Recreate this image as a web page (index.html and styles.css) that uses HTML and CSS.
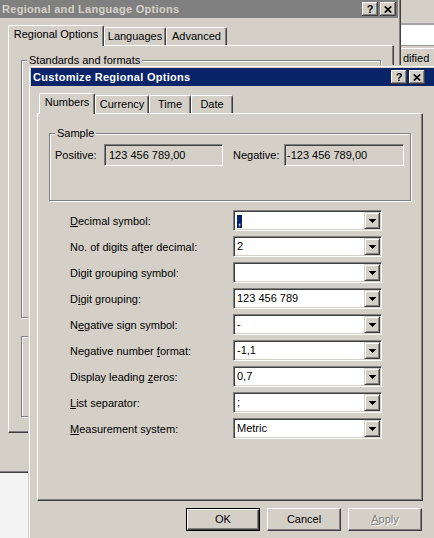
FILE: index.html
```html
<!DOCTYPE html>
<html>
<head>
<meta charset="utf-8">
<title>Customize Regional Options</title>
<link rel="stylesheet" href="styles.css">
</head>
<body>
<div class="win-side">
  <div class="side-field"></div>
  <div class="side-sep"></div>
  <div class="side-text">dified</div>
</div>

<div class="win win-back">
  <div class="title inactive">
    <span class="title-text">Regional and Language Options</span>
    <span class="cap-btns">
      <span class="cap-btn">?</span>
      <span class="cap-btn"><svg width="8" height="7" viewBox="0 0 8 7"><path d="M0.8 0.4 L7.2 6.6 M7.2 0.4 L0.8 6.6" stroke="#000" stroke-width="1.7"/></svg></span>
    </span>
  </div>
  <div class="client back-client">
    <div class="tabs">
      <div class="tab sel w-reg">Regional Options</div>
      <div class="tab w-lang">Languages</div>
      <div class="tab w-adv">Advanced</div>
    </div>
    <div class="panel">
      <div class="group back-g1"><span class="legend">Standards and formats</span></div>
      <div class="group back-g2"></div>
    </div>
  </div>
</div>

<div class="win win-front">
  <div class="title active">
    <span class="title-text">Customize Regional Options</span>
    <span class="cap-btns front-btns">
      <span class="cap-btn">?</span>
      <span class="cap-btn"><svg width="8" height="7" viewBox="0 0 8 7"><path d="M0.8 0.4 L7.2 6.6 M7.2 0.4 L0.8 6.6" stroke="#000" stroke-width="1.7"/></svg></span>
    </span>
  </div>
  <div class="client front-client">
    <div class="tabs front-tabs">
      <div class="tab sel w-num">Numbers</div>
      <div class="tab w-cur">Currency</div>
      <div class="tab w-time">Time</div>
      <div class="tab w-date">Date</div>
    </div>
    <div class="panel">
      <div class="group sample">
        <span class="legend">Sample</span>
        <div class="sample-row">
          <span class="s-label">Positive:</span>
          <span class="readout pos">123 456 789,00</span>
          <span class="s-label neg">Negative:</span>
          <span class="readout negbox">-123 456 789,00</span>
        </div>
      </div>
      <div class="rows">
        <span class="lbl"><u>D</u>ecimal symbol:</span>
        <div class="combo"><span class="combo-val"><span class="hl">,</span></span><span class="drop"><svg width="7" height="4" viewBox="0 0 7 4"><path d="M0 0h7v1h-1v1h-1v1h-1v1h-1v-1h-1v-1h-1v-1h-1z"/></svg></span></div>

        <span class="lbl">No. of digits af<u>t</u>er decimal:</span>
        <div class="combo"><span class="combo-val">2</span><span class="drop"><svg width="7" height="4" viewBox="0 0 7 4"><path d="M0 0h7v1h-1v1h-1v1h-1v1h-1v-1h-1v-1h-1v-1h-1z"/></svg></span></div>

        <span class="lbl">Digit <u>g</u>rouping symbol:</span>
        <div class="combo"><span class="combo-val"></span><span class="drop"><svg width="7" height="4" viewBox="0 0 7 4"><path d="M0 0h7v1h-1v1h-1v1h-1v1h-1v-1h-1v-1h-1v-1h-1z"/></svg></span></div>

        <span class="lbl">D<u>i</u>git grouping:</span>
        <div class="combo"><span class="combo-val">123 456 789</span><span class="drop"><svg width="7" height="4" viewBox="0 0 7 4"><path d="M0 0h7v1h-1v1h-1v1h-1v1h-1v-1h-1v-1h-1v-1h-1z"/></svg></span></div>

        <span class="lbl">N<u>e</u>gative sign symbol:</span>
        <div class="combo"><span class="combo-val">-</span><span class="drop"><svg width="7" height="4" viewBox="0 0 7 4"><path d="M0 0h7v1h-1v1h-1v1h-1v1h-1v-1h-1v-1h-1v-1h-1z"/></svg></span></div>

        <span class="lbl">Negative number <u>f</u>ormat:</span>
        <div class="combo"><span class="combo-val">-1,1</span><span class="drop"><svg width="7" height="4" viewBox="0 0 7 4"><path d="M0 0h7v1h-1v1h-1v1h-1v1h-1v-1h-1v-1h-1v-1h-1z"/></svg></span></div>

        <span class="lbl">Display leading <u>z</u>eros:</span>
        <div class="combo"><span class="combo-val">0,7</span><span class="drop"><svg width="7" height="4" viewBox="0 0 7 4"><path d="M0 0h7v1h-1v1h-1v1h-1v1h-1v-1h-1v-1h-1v-1h-1z"/></svg></span></div>

        <span class="lbl"><u>L</u>ist separator:</span>
        <div class="combo"><span class="combo-val">;</span><span class="drop"><svg width="7" height="4" viewBox="0 0 7 4"><path d="M0 0h7v1h-1v1h-1v1h-1v1h-1v-1h-1v-1h-1v-1h-1z"/></svg></span></div>

        <span class="lbl"><u>M</u>easurement system:</span>
        <div class="combo"><span class="combo-val">Metric</span><span class="drop"><svg width="7" height="4" viewBox="0 0 7 4"><path d="M0 0h7v1h-1v1h-1v1h-1v1h-1v-1h-1v-1h-1v-1h-1z"/></svg></span></div>
      </div>
    </div>
    <div class="btn-row">
      <button class="btn default">OK</button>
      <button class="btn">Cancel</button>
      <button class="btn disabled"><u>A</u>pply</button>
    </div>
  </div>
</div>
</body>
</html>
```

FILE: styles.css
```css
* { box-sizing: border-box; }
html, body { margin: 0; padding: 0; }
body {
  width: 434px;
  height: 538px;
  overflow: hidden;
  position: relative;
  background: #f4f4f4;
  font-family: "Liberation Sans", Arial, sans-serif;
  font-size: 11px;
  color: #000;
}

/* window partly hidden at the right */
.win-side {
  position: absolute;
  left: 398px;
  top: 0;
  width: 36px;
  height: 70px;
  background: #d4d0c8;
  z-index: 0;
}
.side-field {
  margin-top: 23px;
  height: 22px;
  background: #fff;
  border-top: 2px solid #a4a4a4;
}
.side-sep {
  height: 4px;
  border-top: 1px solid #9a9a9a;
  border-bottom: 1px solid #fff;
}
.side-text {
  padding: 3px 0 0 5px;
  line-height: 13px;
}

/* windows (cropped by the screen edges) */
.win {
  position: absolute;
  background: #d4d0c8;
  display: flex;
  flex-direction: column;
}
.win-back {
  left: 0;
  top: 0;
  width: 401px;
  height: 473px;
  z-index: 1;
  border-right: 1px solid #404040;
  border-bottom: 1px solid #404040;
  box-shadow: inset -1px -1px #808080;
  padding: 0 2px 2px 0;
}
.win-front {
  left: 28px;
  top: 65px;
  width: 406px;
  height: 473px;
  z-index: 2;
  border-left: 1px solid #d4d0c8;
  border-top: 1px solid #d4d0c8;
  box-shadow: inset 1px 1px #fff;
  padding: 2px 0 0 2px;
}

.title {
  height: 18px;
  flex: none;
  display: flex;
  align-items: center;
  padding: 0 2px 0 2px;
  font-weight: bold;
  letter-spacing: 0.3px;
}
.title.inactive { background: #808080; color: #d4d0c8; }
.title.active { background: #0a246a; color: #fff; }
.title-text { flex: 1; white-space: nowrap; }
.cap-btns { display: flex; gap: 2px; }
.front-btns { margin-right: 7px; }
.cap-btn {
  width: 16px;
  height: 14px;
  background: #d4d0c8;
  box-shadow: inset -1px -1px #404040, inset 1px 1px #fff, inset -2px -2px #808080;
  color: #000;
  font-weight: bold;
  font-size: 11px;
  letter-spacing: 0;
  line-height: 14px;
  display: flex;
  align-items: center;
  justify-content: center;
}

.client { flex: 1; padding-top: 7px; }
.back-client { padding-left: 8px; }
.front-client { padding-left: 6px; }

/* tabs */
.tabs { display: flex; align-items: flex-end; height: 20px; }
.front-tabs { padding-left: 2px; }
.tab {
  height: 18px;
  border: 1px solid;
  border-color: #fff #404040 transparent #fff;
  border-bottom: 0;
  border-radius: 2px 2px 0 0;
  box-shadow: inset -1px 0 #808080;
  text-align: center;
  line-height: 17px;
  white-space: nowrap;
}
.tab.sel {
  height: 21px;
  margin-bottom: -1px;
  position: relative;
  z-index: 1;
  background: #d4d0c8;
}
.w-reg { width: 96px; }
.w-lang { width: 62px; }
.w-adv { width: 61px; }
.w-num { width: 56px; }
.w-cur { width: 54px; }
.w-time { width: 42px; }
.w-date { width: 42px; }

.panel {
  width: 386px;
  height: 388px;
  border: 1px solid;
  border-color: #fff #404040 #404040 #fff;
  box-shadow: inset -1px -1px #808080;
  display: flex;
  flex-direction: column;
}

/* group boxes */
.group {
  border: 1px solid #808080;
  box-shadow: inset 1px 1px #fff, 1px 1px #fff;
}
.legend {
  display: block;
  width: max-content;
  margin-top: -7px;
  padding: 0 2px;
  line-height: 13px;
  background: #d4d0c8;
}
.back-g1 { margin: 14px 11px 0 12px; height: 258px; padding-left: 5px; width: 360px; }
.back-g2 { margin: 18px 11px 0 12px; height: 81px; width: 360px; }

.sample { margin: 19px 11px 0 11px; padding: 0 0 34px 5px; }
.sample-row { display: flex; align-items: center; margin-top: 4px; }
.s-label { width: 49px; white-space: nowrap; }
.s-label.neg { width: 51px; margin-left: 10px; }
.readout {
  height: 22px;
  border: 1px solid;
  border-color: #808080 #fff #fff #808080;
  box-shadow: inset 1px 1px #404040, inset -1px -1px #d4d0c8;
  padding: 0 4px;
  line-height: 20px;
  white-space: nowrap;
}
.readout.pos { width: 119px; }
.readout.negbox { width: 120px; padding-left: 2px; }

/* rows of settings */
.rows {
  display: grid;
  grid-template-columns: 163px 149px;
  row-gap: 5px;
  margin: 9px 0 0 32px;
  align-items: center;
}
.lbl { white-space: nowrap; }
.combo {
  height: 21px;
  display: flex;
  border: 1px solid;
  border-color: #808080 #fff #fff #808080;
  box-shadow: inset 1px 1px #404040, inset -1px -1px #d4d0c8;
  background: #fff;
  padding: 1px;
}
.combo-val {
  flex: 1;
  padding-left: 2px;
  line-height: 17px;
  white-space: nowrap;
}
.hl {
  display: inline-block;
  background: #0a246a;
  color: #fff;
  line-height: 13px;
  padding: 0 1px;
  vertical-align: middle;
}
.drop {
  width: 16px;
  height: 17px;
  background: #d4d0c8;
  border: 1px solid;
  border-color: #d4d0c8 #404040 #404040 #d4d0c8;
  box-shadow: inset 1px 1px #fff, inset -1px -1px #808080;
  display: flex;
  align-items: center;
  justify-content: center;
  padding-left: 1px;
}
.drop svg { display: block; }

/* buttons */
.btn-row {
  display: flex;
  justify-content: flex-end;
  gap: 7px;
  width: 386px;
  padding-right: 1px;
  margin-top: 7px;
}
.btn {
  width: 74px;
  height: 23px;
  margin: 0;
  padding: 0;
  font: inherit;
  color: #000;
  background: #d4d0c8;
  border: 1px solid;
  border-color: #fff #404040 #404040 #fff;
  box-shadow: inset -1px -1px #808080;
  text-align: center;
  line-height: 21px;
}
.btn.default {
  border-color: #000;
  box-shadow: inset 1px 1px #fff, inset -1px -1px #404040, inset -2px -2px #808080;
}
.btn.disabled { color: #808080; text-shadow: 1px 1px #fff; }
```
